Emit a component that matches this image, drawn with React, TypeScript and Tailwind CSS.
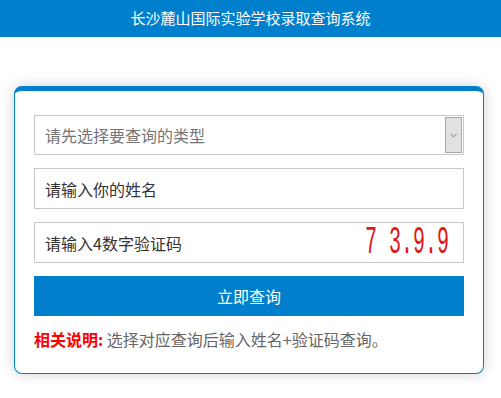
import { ChevronDown } from "lucide-react";

const font = { fontFamily: '"Microsoft YaHei", "Noto Sans CJK SC", sans-serif' };

const App = () => {
  return (
    <div className="min-h-[398px] w-full bg-white" style={font}>
      {/* Header */}
      <div className="flex h-[37px] items-center justify-center bg-[#0080cc] text-[15px] text-white">
        长沙麓山国际实验学校录取查询系统
      </div>

      {/* Card */}
      <div className="mx-[14px] mt-[49px] w-[470px] rounded-[8px] border border-t-[5px] border-[#0080cc] bg-white px-[19px] pt-[24px] pb-[23px] shadow-[0_0_14px_rgba(0,0,0,0.18)]">
        <div className="flex flex-col gap-[13px]">
          {/* Select */}
          <div className="flex h-[40px] items-stretch border border-[#c8c8c8] pr-px">
            <div className="flex flex-1 items-center pl-[10px] text-[16px] text-[#757575]">请先选择要查询的类型</div>
            <div className="my-px flex w-[17px] items-center justify-center border border-[#a8a8a8] bg-[#e1e1e1] text-[#444]">
              <ChevronDown size={11} strokeWidth={1.5} />
            </div>
          </div>

          {/* Name */}
          <div className="flex h-[41px] items-center border border-[#c8c8c8] pl-[10px] text-[16px] text-[#333]">
            请输入你的姓名
          </div>

          {/* Captcha */}
          <div className="flex h-[41px] items-center justify-between border border-[#c8c8c8] pl-[10px] pr-[14px] text-[16px] text-[#333]">
            <span>请输入4数字验证码</span>
            <span
              className="inline-block origin-center scale-y-[1.9] text-[20px] leading-none text-[#e01818]"
              style={{ fontFamily: '"Liberation Mono", monospace' }}
            >
              7 3.9.9
            </span>
          </div>

          {/* Button */}
          <div className="flex h-[40px] items-center justify-center bg-[#0080cc] text-[16px] text-white">
            立即查询
          </div>
        </div>

        {/* Note */}
        <div className="mt-[12px] text-[16px] leading-[22px] text-[#666]">
          <span className="font-bold text-[#ff0000]">相关说明:</span> 选择对应查询后输入姓名+验证码查询。
        </div>
      </div>
    </div>
  );
};

export default App;
